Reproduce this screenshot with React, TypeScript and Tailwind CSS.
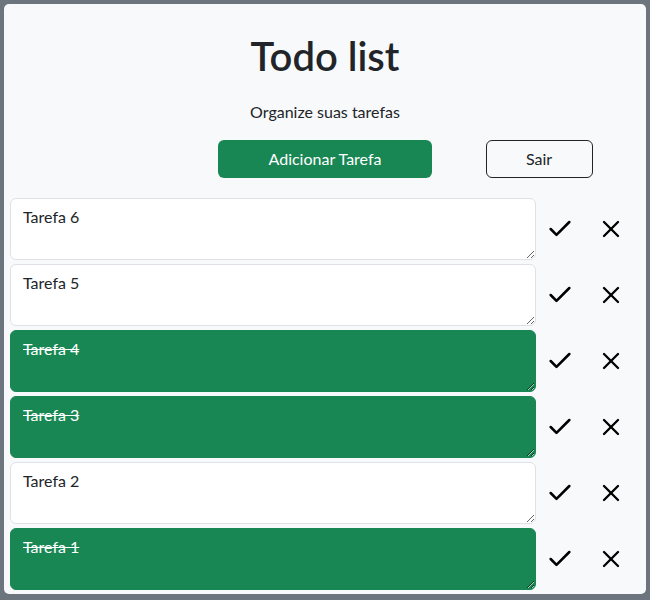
import { Check, X } from 'lucide-react';

type Task = { id: number; title: string; done: boolean };

const tasks: Task[] = [
  { id: 6, title: 'Tarefa 6', done: false },
  { id: 5, title: 'Tarefa 5', done: false },
  { id: 4, title: 'Tarefa 4', done: true },
  { id: 3, title: 'Tarefa 3', done: true },
  { id: 2, title: 'Tarefa 2', done: false },
  { id: 1, title: 'Tarefa 1', done: true },
];

const TaskRow = ({ task }: { task: Task }) => {
  return (
    <div className="flex items-center">
      <textarea
        readOnly
        defaultValue={task.title}
        className={
          task.done
            ? 'ml-[6px] h-[62px] w-[526px] rounded-[6px] border border-[#198754] bg-[#198754] px-3 py-1.5 text-base leading-6 text-white line-through outline-none'
            : 'ml-[6px] h-[62px] w-[526px] rounded-[6px] border border-[#dee2e6] bg-white px-3 py-1.5 text-base leading-6 text-[#212529] outline-none'
        }
      />
      <div className="ml-[10px] flex gap-[23px]">
        <button className="flex h-[28px] w-[28px] items-center justify-center text-black">
          <Check size={28} strokeWidth={2.2} />
        </button>
        <button className="flex h-[28px] w-[28px] items-center justify-center text-black">
          <X size={28} strokeWidth={2} />
        </button>
      </div>
    </div>
  );
};

const App = () => {
  return (
    <div
      className="min-h-screen bg-[#6c757d] p-[4px] text-[#212529]"
      style={{ fontFamily: 'Lato, sans-serif' }}
    >
      <section className="rounded-[5px] bg-[#f8f9fa] pb-[4px]">
        <h1 className="pt-[28px] text-center text-[40px] font-semibold leading-[1.2]">
          Todo list
        </h1>
        <p className="mt-[20px] text-center text-base leading-6">
          Organize suas tarefas
        </p>
        <div className="mt-[16px] grid grid-cols-12">
          <button className="col-span-4 col-start-5 h-[38px] rounded-[6px] bg-[#198754] text-base text-white">
            Adicionar Tarefa
          </button>
          <button className="col-span-2 col-start-10 h-[38px] rounded-[6px] border border-[#212529] text-base text-[#212529]">
            Sair
          </button>
        </div>
        <div className="mt-[20px] flex flex-col gap-[4px]">
          {tasks.map((task) => (
            <TaskRow key={task.id} task={task} />
          ))}
        </div>
      </section>
    </div>
  );
};

export default App;
